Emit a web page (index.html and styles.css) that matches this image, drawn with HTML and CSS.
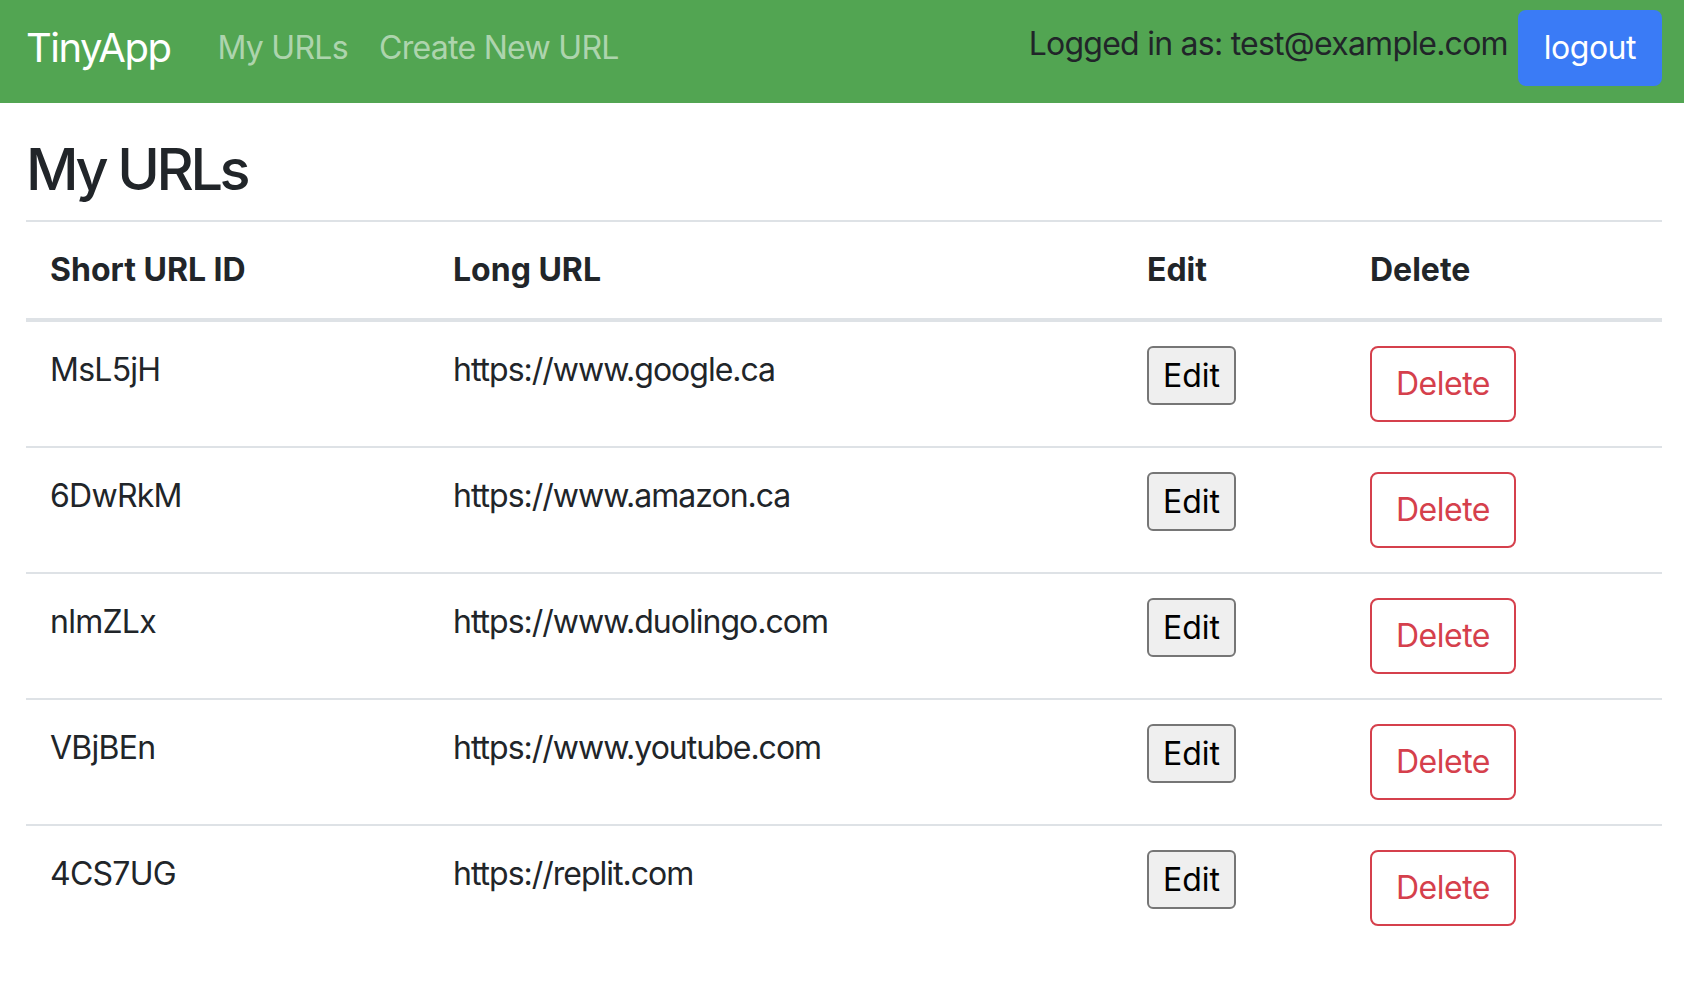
FILE: index.html
```html
<!DOCTYPE html>
<html lang="en">
<head>
<meta charset="utf-8">
<title>TinyApp</title>
<link rel="stylesheet" href="styles.css">
</head>
<body>
<nav class="navbar">
  <a class="brand" href="#">TinyApp</a>
  <div class="nav-links">
    <a class="nav-link" href="#">My URLs</a>
    <a class="nav-link" href="#">Create New URL</a>
  </div>
  <div class="nav-right">
    <span class="user">Logged in as: test@example.com</span>
    <button class="btn btn-primary">logout</button>
  </div>
</nav>
<main class="content">
  <h2 class="title">My URLs</h2>
  <table class="url-table">
    <colgroup>
      <col class="c1"><col class="c2"><col class="c3"><col class="c4">
    </colgroup>
    <thead>
      <tr><th>Short URL ID</th><th>Long URL</th><th>Edit</th><th>Delete</th></tr>
    </thead>
    <tbody>
      <tr><td>MsL5jH</td><td class="url">https://www.google.ca</td><td><button class="edit-btn">Edit</button></td><td><button class="btn btn-danger">Delete</button></td></tr>
      <tr><td>6DwRkM</td><td class="url">https://www.amazon.ca</td><td><button class="edit-btn">Edit</button></td><td><button class="btn btn-danger">Delete</button></td></tr>
      <tr><td>nlmZLx</td><td class="url">https://www.duolingo.com</td><td><button class="edit-btn">Edit</button></td><td><button class="btn btn-danger">Delete</button></td></tr>
      <tr><td>VBjBEn</td><td class="url">https://www.youtube.com</td><td><button class="edit-btn">Edit</button></td><td><button class="btn btn-danger">Delete</button></td></tr>
      <tr><td>4CS7UG</td><td class="url">https://replit.com</td><td><button class="edit-btn">Edit</button></td><td><button class="btn btn-danger">Delete</button></td></tr>
    </tbody>
  </table>
</main>
</body>
</html>
```
FILE: styles.css
```css
* { box-sizing: border-box; }
body {
  margin: 0;
  font-family: Inter, "Noto Sans", "Liberation Sans", sans-serif;
  font-size: 32px;
  line-height: 1.5;
  letter-spacing: -0.75px;
  color: #212529;
  background: #fff;
}
.navbar {
  display: flex;
  align-items: center;
  height: 103px;
  padding: 10px 22px 17px 26px;
  background: #52a552;
}
.brand {
  font-size: 40px;
  line-height: 60px;
  letter-spacing: -1.5px;
  color: #fff;
  text-decoration: none;
  margin-right: 31px;
}
.nav-links { display: flex; }
.nav-link {
  padding: 0 15px 0 16px;
  color: rgba(255, 255, 255, 0.55);
  text-decoration: none;
  line-height: 48px;
  letter-spacing: -0.7px;
}
.nav-right {
  margin-left: auto;
  display: flex;
  align-items: center;
}
.user {
  margin-bottom: 8px;
  margin-right: 10px;
}
.btn {
  font-family: inherit;
  font-size: 32px;
  line-height: 48px;
  letter-spacing: -0.5px;
  padding: 12px 24px;
  border: 2px solid transparent;
  border-radius: 8px;
  cursor: pointer;
}
.btn-primary {
  background: #3a7bf6;
  border-color: #3a7bf6;
  color: #fff;
}
.btn-danger {
  background: transparent;
  border-color: #d5404c;
  color: #d5404c;
}
.content {
  padding: 0 22px 0 26px;
}
.title {
  margin: 32px 0 16px;
  font-size: 57.6px;
  font-weight: 500;
  line-height: 1.2;
  letter-spacing: -3.4px;
}
.url-table {
  width: 100%;
  border-collapse: collapse;
  table-layout: fixed;
  border-top: 2px solid #dee2e6;
}
.c1 { width: 403px; }
.c2 { width: 694px; }
.c3 { width: 223px; }
.url-table th {
  text-align: left;
  font-weight: 700;
  letter-spacing: 0;
  padding: 24px;
  border-bottom: 4px solid #dee2e6;
}
.url-table td {
  padding: 24px;
  vertical-align: top;
}
.url-table td.url { letter-spacing: -1px; }
.url-table tbody tr { border-bottom: 2px solid #dee2e6; }
.url-table tbody tr:last-child { border-bottom: 0; }
.edit-btn {
  font-family: inherit;
  font-size: 32px;
  line-height: 49px;
  padding: 3px 14px;
  color: #000;
  background: #efefef;
  border: 2px solid #767676;
  border-radius: 6px;
}
```
